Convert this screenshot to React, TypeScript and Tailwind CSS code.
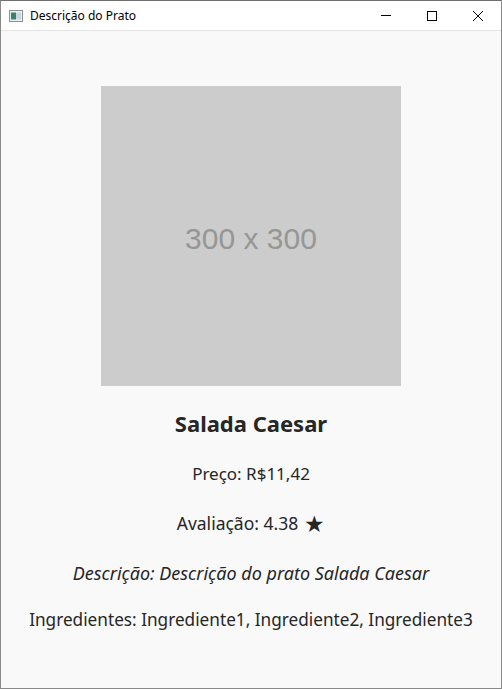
export default function App() {
  return (
    <div className="h-[690px] w-[502px] overflow-hidden bg-white" style={{ fontFamily: '"Noto Sans", "Open Sans", sans-serif' }}>
      <div className="flex h-[689px] flex-col border border-[#8a8a8a] border-t-[#6f6f6f]">
        {/* Title bar */}
        <div className="flex h-[30px] items-center border-b border-[#e5e5e5] bg-white">
          <svg className="ml-[8px]" width="14" height="12" viewBox="0 0 14 12">
            <rect x="0.5" y="0.5" width="13" height="11" fill="#f0f0f0" stroke="#8e8e8e" />
            <rect x="2" y="2.5" width="5" height="7" fill="#3f7f73" />
            <rect x="7" y="2.5" width="5" height="7" fill="#c8d8e0" />
          </svg>
          <span className="ml-[7px] text-[12px] text-black">Descrição do Prato</span>
          <div className="ml-auto flex h-full">
            <div className="flex w-[46px] items-center justify-center">
              <div className="h-px w-[10px] bg-black" />
            </div>
            <div className="flex w-[46px] items-center justify-center">
              <div className="h-[10px] w-[10px] border border-black" />
            </div>
            <div className="flex w-[46px] items-center justify-center">
              <svg width="10" height="10" viewBox="0 0 10 10">
                <path d="M0 0L10 10M10 0L0 10" stroke="#000" strokeWidth="1" />
              </svg>
            </div>
          </div>
        </div>

        {/* Content */}
        <div className="flex flex-1 flex-col items-center bg-[#f9f9f9] text-[#262626]">
          <div className="mt-[55px] flex h-[300px] w-[300px] items-center justify-center bg-[#cccccc] pt-[4px]">
            <span className="text-[30px] text-[#969696]" style={{ fontFamily: '"Liberation Sans", Arial, sans-serif' }}>
              300 x 300
            </span>
          </div>
          <h1 className="mt-[22px] text-[22px] font-bold leading-[30px]">Salada Caesar</h1>
          <p className="mt-[24px] text-[17px] leading-[24px]">Preço: R$11,42</p>
          <p className="mt-[25px] flex h-[24px] items-center gap-[6px] text-[17.5px] leading-[24px]">
            <span>Avaliação: 4.38</span>
            <span className="text-[23px] leading-none">★</span>
          </p>
          <p className="mt-[26px] text-[18px] italic leading-[24px]">Descrição: Descrição do prato Salada Caesar</p>
          <p className="mt-[23px] text-[17.2px] leading-[24px]">Ingredientes: Ingrediente1, Ingrediente2, Ingrediente3</p>
        </div>
      </div>
    </div>
  );
}
